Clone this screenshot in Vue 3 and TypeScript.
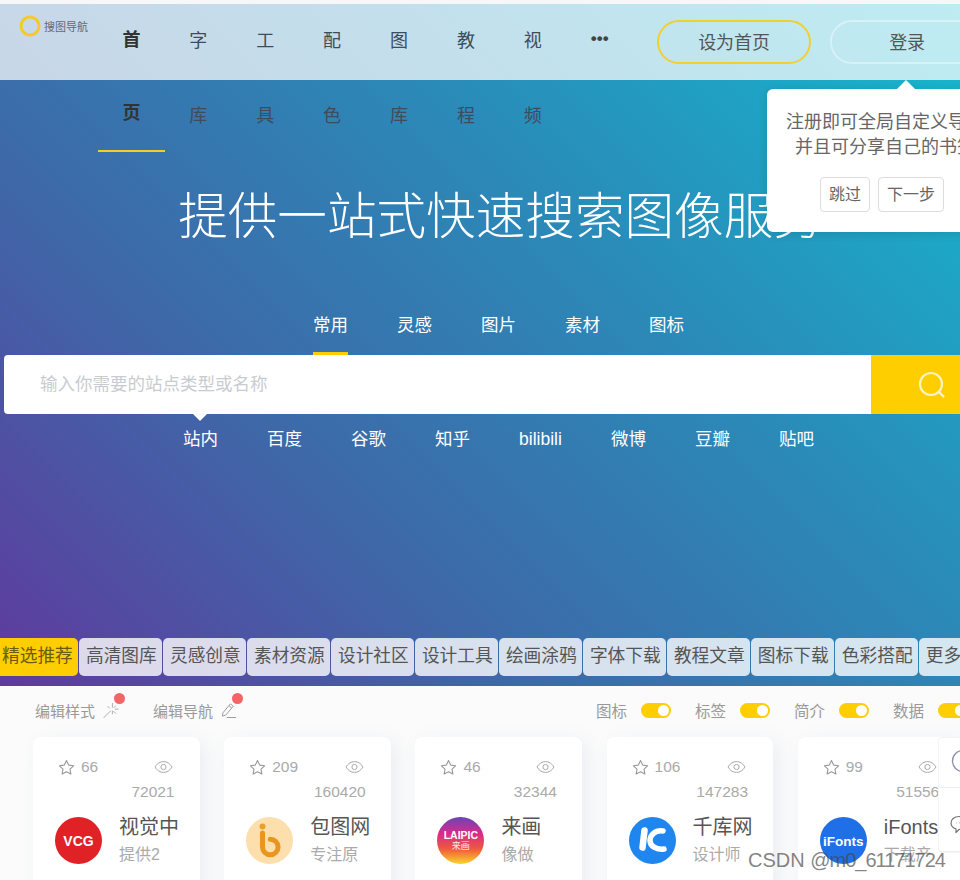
<template>
  <div class="page">
    <div class="top-strip"></div>
    <section class="hero">
      <header class="header">
        <div class="logo">
          <svg width="24" height="24" viewBox="0 0 24 24"><circle cx="12" cy="12" r="9" fill="none" stroke="#f5c92c" stroke-width="3" /></svg>
          <span>搜图导航</span>
        </div>
        <nav class="nav">
          <a v-for="(item, i) in navItems" :key="item" :class="['nav-item', { active: i === 0 }]">{{ item }}</a>
          <a class="nav-item more">•••</a>
        </nav>
        <button class="pill home">设为首页</button>
        <button class="pill login">登录</button>
      </header>

      <h1 class="title">提供一站式快速搜索图像服务</h1>

      <div class="tabs">
        <a v-for="(t, i) in tabs" :key="t" :class="['tab', { active: i === 0 }]">{{ t }}</a>
      </div>
      <div class="search">
        <input class="search-input" placeholder="输入你需要的站点类型或名称" />
        <button class="search-btn">
          <svg width="30" height="30" viewBox="0 0 30 30" fill="none" stroke="#fdf3c4" stroke-width="2.2" stroke-linecap="round">
            <circle cx="14" cy="14" r="11" />
            <path d="M22.5 22.5l4 4" />
          </svg>
        </button>
        <span class="search-arrow"></span>
      </div>
      <div class="engines">
        <a v-for="e in engines" :key="e">{{ e }}</a>
      </div>

      <div class="cats">
        <a v-for="(c, i) in cats" :key="c" :class="['cat', { active: i === 0 }]">{{ c }}</a>
      </div>
    </section>

    <section class="content">
      <div class="toolbar">
        <div class="edit-group">
          <a class="edit">
            编辑样式
            <svg width="16" height="17" viewBox="0 0 17 17" fill="none" stroke="#aaa" stroke-width="1" stroke-linecap="round">
              <path d="M1 16l7-7M10 1v4M10 9v3M5 4l2 2M13 7h3M11.5 5.5l2-2M11.5 9.5l2 2" />
            </svg>
            <i class="dot"></i>
          </a>
          <a class="edit">
            编辑导航
            <svg width="16" height="18" viewBox="0 0 17 18" fill="none" stroke="#999" stroke-width="1" stroke-linejoin="round">
              <path d="M2 12L10 2.5l3 2.5-8 9.500-3.500 1z" />
              <path d="M8.500 4.500l3 2.500M6 17h10" />
            </svg>
            <i class="dot"></i>
          </a>
        </div>
        <div class="switches">
          <label v-for="s in switches" :key="s" class="switch">
            {{ s }}
            <span class="toggle"><i></i></span>
          </label>
        </div>
      </div>

      <div class="cards">
        <article v-for="c in cards" :key="c.name" class="card">
          <div class="stats">
            <span class="stars">
              <svg width="17" height="17" viewBox="0 0 17 17" fill="none" stroke="#999" stroke-width="1.1" stroke-linejoin="round">
                <path d="M8.5 1.6l2.2 4.5 4.9.7-3.6 3.4.9 4.9-4.4-2.3-4.4 2.3.9-4.9L1.4 6.8l4.9-.7z" />
              </svg>
              {{ c.stars }}
            </span>
            <svg class="eye" width="19" height="14" viewBox="0 0 19 14" fill="none" stroke="#aaa" stroke-width="1">
              <path d="M1 7c2.2-3.6 5-5.4 8.5-5.4S15.8 3.4 18 7c-2.2 3.6-5 5.4-8.5 5.4S3.2 10.6 1 7z" />
              <circle cx="9.5" cy="7" r="2.6" />
            </svg>
          </div>
          <div class="views">{{ c.views }}</div>
          <div class="info">
            <div :class="['avatar', c.logo]">
              <template v-if="c.logo === 'vcg'">VCG</template>
              <template v-else-if="c.logo === 'ifonts'">iFonts</template>
              <template v-else-if="c.logo === 'laipic'">
                <span class="laipic-en">LAIPIC</span>
                <span class="laipic-cn">来画</span>
              </template>
              <svg v-else-if="c.logo === 'ibao'" width="47" height="47" viewBox="0 0 47 47" fill="none">
                <circle cx="16.5" cy="9.5" r="3" fill="#e9a02c" />
                <path d="M16.5 16v14a7.8 7.8 0 1 0 7.800-7.800" stroke="#e8961f" stroke-width="5" stroke-linecap="round" />
              </svg>
              <svg v-else width="47" height="47" viewBox="0 0 47 47" fill="none" stroke="#fff" stroke-linecap="round">
                <path d="M15.5 13.500l-2 17" stroke-width="6.500" />
                <path d="M34 14C26 13 21 18 21 23.500 21 29 27 33 35 32" stroke-width="5.500" />
              </svg>
            </div>
            <div class="meta">
              <div class="name">{{ c.name }}</div>
              <div class="desc">{{ c.desc }}</div>
            </div>
          </div>
        </article>
      </div>
    </section>

    <!-- sticky side buttons sit over the last card -->
    <aside class="side">
      <div class="side-item first">
        <svg width="30" height="24" viewBox="0 0 30 24" fill="none" stroke="#8b90a8" stroke-width="1.300">
          <circle cx="13" cy="12" r="10.500" />
          <path d="M13 6v6l4 3" />
        </svg>
      </div>
      <div class="side-item second">
        <svg width="24" height="20" viewBox="0 0 24 20" fill="none" stroke="#777" stroke-width="1.200" stroke-linejoin="round">
          <path d="M9 1.500c5 0 8 3 8 6.500s-3 6.500-8 6.500l-3 3v-3.700C3 13 1 11 1 8c0-3.500 3-6.500 8-6.500z" />
          <path d="M6 8h.5M9.500 8h.5" />
        </svg>
      </div>
    </aside>

    <div class="guide">
      <p>注册即可全局自定义导航</p>
      <p>并且可分享自己的书签</p>
      <div class="guide-actions">
        <button class="skip">跳过</button>
        <button class="next">下一步</button>
      </div>
    </div>

    <div class="watermark">CSDN <span>@m0_61171724</span></div>
  </div>
</template>

<script setup lang="ts">
interface Site {
  name: string
  desc: string
  stars: number
  views: number
  logo: string
}

const navItems = ['首页', '字库', '工具', '配色', '图库', '教程', '视频']
const tabs = ['常用', '灵感', '图片', '素材', '图标']
const engines = ['站内', '百度', '谷歌', '知乎', 'bilibili', '微博', '豆瓣', '贴吧']
const cats = ['精选推荐', '高清图库', '灵感创意', '素材资源', '设计社区', '设计工具', '绘画涂鸦', '字体下载', '教程文章', '图标下载', '色彩搭配', '更多']
const switches = ['图标', '标签', '简介', '数据']
const cards: Site[] = [
  { name: '视觉中', desc: '提供2', stars: 66, views: 72021, logo: 'vcg' },
  { name: '包图网', desc: '专注原', stars: 209, views: 160420, logo: 'ibao' },
  { name: '来画', desc: '像做', stars: 46, views: 32344, logo: 'laipic' },
  { name: '千库网', desc: '设计师', stars: 106, views: 147283, logo: 'ic' },
  { name: 'iFonts', desc: '下载产', stars: 99, views: 51556, logo: 'ifonts' }
]
</script>

<style>
html, body { margin: 0; background: #fff; }
</style>

<style scoped>
.page {
  position: relative;
  width: 960px;
  height: 880px;
  overflow: hidden;
  background: #fbfbfb;
  font-family: "Liberation Sans", "Noto Sans CJK SC", sans-serif;
}
.top-strip { height: 4px; background: #f7f7f7; }

.hero {
  width: 1000px;
  height: 682px;
  display: flex;
  flex-direction: column;
  background: linear-gradient(45deg, #5f3a9e 0%, #3f67a8 30%, #2a8bb9 62%, #13bdd0 100%);
}
.header {
  height: 76px;
  flex: none;
  display: flex;
  align-items: flex-start;
  background: rgba(255, 255, 255, 0.72);
}
.logo {
  width: 80px;
  margin: 10px 0 0 18px;
  display: flex;
  align-items: center;
  font-size: 11px;
  color: #667;
  white-space: nowrap;
}
.logo svg { flex: none; margin-right: 2px; }
.nav { display: flex; height: 148px; }
.nav-item {
  box-sizing: border-box;
  width: 66.9px;
  height: 148px;
  padding: 0 24px;
  font-size: 18px;
  line-height: 75px;
  color: #3e4c5c;
  text-align: center;
}
.nav-item.active {
  color: #333;
  font-weight: 700;
  line-height: 73px;
  border-bottom: 2px solid #f5cf1f;
}
.nav-item.more {
  padding: 0;
  font-size: 17px;
  line-height: 70px;
  color: #444;
  font-weight: 700;
  white-space: nowrap;
}
.pill {
  box-sizing: border-box;
  height: 44px;
  width: 154px;
  margin-top: 16px;
  padding: 0 0 3px;
  border-radius: 22px;
  background: transparent;
  font: inherit;
  font-size: 18px;
  color: #555;
}
.home { margin-left: 24px; border: 2px solid #f3cf2e; }
.login { margin-left: 19px; border: 2px solid rgba(255, 255, 255, 0.4); }

.title {
  margin: 102px 0 0;
  height: 70px;
  padding-left: 1px;
  font-size: 49.6px;
  line-height: 70px;
  font-weight: 300;
  color: #fff;
  text-align: center;
}
.tabs {
  margin-top: 48px;
  height: 55px;
  padding-right: 3px;
  display: flex;
  justify-content: center;
  gap: 49px;
}
.tab {
  box-sizing: border-box;
  height: 55px;
  font-size: 17.5px;
  line-height: 50px;
  color: #fff;
}
.tab.active { border-bottom: 3px solid #ffce00; }

.search {
  position: relative;
  margin-left: 4px;
  width: 992px;
  height: 59px;
  flex: none;
  display: flex;
  border-radius: 4px 0 0 4px;
  background: #fff;
}
.search-input {
  flex: 1;
  min-width: 0;
  padding: 0 0 0 36px;
  border: 0;
  outline: 0;
  background: transparent;
  border-radius: 4px 0 0 4px;
  font: inherit;
  font-size: 17.5px;
}
.search-input::placeholder { color: #c8ccd2; }
.search-btn {
  width: 125px;
  padding: 0 0 0 46px;
  border: 0;
  background: #ffce00;
  display: flex;
  align-items: center;
  justify-content: flex-start;
}
.search-arrow {
  position: absolute;
  left: 189px;
  bottom: -7px;
  border: 7px solid transparent;
  border-top-color: #fff;
  border-bottom: 0;
}
.engines {
  margin-top: 12px;
  padding-right: 3px;
  display: flex;
  justify-content: center;
  gap: 49px;
  font-size: 17.5px;
  line-height: 26px;
  color: #fff;
}
.cats {
  margin: auto 0 10px -5px;
  display: flex;
  gap: 0.6px;
}
.cat {
  box-sizing: border-box;
  flex: none;
  width: 83.4px;
  height: 38px;
  padding-left: 7px;
  border-radius: 5px;
  font-size: 17.7px;
  line-height: 36px;
  color: #555;
  background: rgba(255, 255, 255, 0.8);
  white-space: nowrap;
}
.cat.active { color: #6b5a10; background: #ffce00; }

.content { width: 1000px; }
.toolbar {
  height: 51px;
  padding: 0 32px 3px 35px;
  box-sizing: border-box;
  display: flex;
  align-items: center;
  justify-content: space-between;
}
.edit-group { display: flex; gap: 34px; }
.edit {
  position: relative;
  display: flex;
  align-items: center;
  gap: 8px;
  font-size: 15px;
  color: #999;
}
.dot {
  position: absolute;
  right: -6px;
  top: -7px;
  width: 11px;
  height: 11px;
  border-radius: 50%;
  background: #f56467;
}
.switches { display: flex; gap: 24px; }
.switch {
  display: flex;
  align-items: center;
  gap: 14px;
  font-size: 15.5px;
  color: #999;
}
.toggle {
  display: flex;
  justify-content: flex-end;
  align-items: center;
  box-sizing: border-box;
  width: 30px;
  height: 15px;
  padding-right: 2px;
  border-radius: 8px;
  background: #ffce00;
}
.toggle i { width: 11px; height: 11px; border-radius: 50%; background: #fff; }

.cards {
  display: flex;
  gap: 24.7px;
  padding-left: 33px;
}
.card {
  box-sizing: border-box;
  flex: none;
  width: 166.5px;
  height: 200px;
  padding: 18px 25px 0;
  border-radius: 8px;
  background: #fff;
  box-shadow: 6px 4px 18px rgba(120, 150, 190, 0.12);
}
.stats { height: 24px; display: flex; align-items: center; justify-content: space-between; }
.stars {
  display: flex;
  align-items: center;
  gap: 6px;
  font-size: 15.5px;
  color: #aaa;
}
.eye { margin-right: 2px; }
.views {
  height: 25px;
  font-size: 15.5px;
  line-height: 26px;
  color: #aaa;
  text-align: right;
}
.info { margin: 9px -25px 0 -3px; display: flex; align-items: flex-start; gap: 17px; }
.avatar {
  flex: none;
  width: 47px;
  height: 47px;
  margin-top: 4px;
  border-radius: 50%;
  display: flex;
  flex-direction: column;
  align-items: center;
  justify-content: center;
  color: #fff;
  font-weight: 700;
  font-size: 14px;
  overflow: hidden;
}
.vcg { background: #e02126; }
.ibao { background: #fddfae; }
.laipic { background: linear-gradient(180deg, #6a45b5 0%, #d92a8c 35%, #ee5a3c 68%, #fbd52a 100%); }
.laipic-en { font-size: 10.5px; line-height: 11px; }
.laipic-cn { font-size: 9px; line-height: 10px; font-weight: 400; opacity: .85; }
.ic { background: #1e86ee; }
.ifonts { background: #1f6fe6; font-size: 13.5px; padding-top: 2px; box-sizing: border-box; }
.meta { min-width: 0; }
.name { font-size: 20px; line-height: 28px; color: #555; white-space: nowrap; }
.desc { font-size: 16px; line-height: 28px; color: #aaa; white-space: nowrap; }

.side {
  position: absolute;
  left: 938px;
  top: 737px;
  width: 60px;
  background: #fff;
  border: 1px solid #f4f4f4;
  border-radius: 4px;
}
.side-item { display: flex; padding-left: 11px; box-sizing: border-box; }
.side-item.first { height: 50px; padding-top: 11px; border-bottom: 1px solid #eee; }
.side-item.second { height: 64px; padding-top: 27px; border-bottom: 1px solid #eee; }

.guide {
  position: absolute;
  left: 767px;
  top: 89px;
  box-sizing: border-box;
  width: 236px;
  height: 143px;
  padding-top: 21px;
  border-radius: 6px;
  background: #fff;
  box-shadow: 0 2px 10px rgba(0, 0, 0, 0.12);
  font-size: 18px;
  line-height: 25px;
  color: #666;
  text-align: center;
}
.guide::before {
  content: "";
  position: absolute;
  left: 130px;
  top: -9px;
  border: 9px solid transparent;
  border-bottom-color: #fff;
  border-top: 0;
}
.guide p { margin: 0; white-space: nowrap; }
.guide-actions {
  margin-top: 17px;
  padding-right: 6px;
  display: flex;
  justify-content: center;
  gap: 8px;
}
.guide-actions button {
  box-sizing: border-box;
  height: 35px;
  padding: 0;
  border: 1px solid #ddd;
  border-radius: 4px;
  background: #fff;
  font: inherit;
  font-size: 16px;
  line-height: 33px;
  color: #666;
}
.skip { width: 50px; }
.next { width: 66px; }

.watermark {
  position: absolute;
  left: 748px;
  top: 847px;
  font-size: 20px;
  line-height: 26px;
  color: rgba(70, 70, 70, 0.68);
  white-space: nowrap;
}
.watermark span { letter-spacing: -1px; }
</style>
